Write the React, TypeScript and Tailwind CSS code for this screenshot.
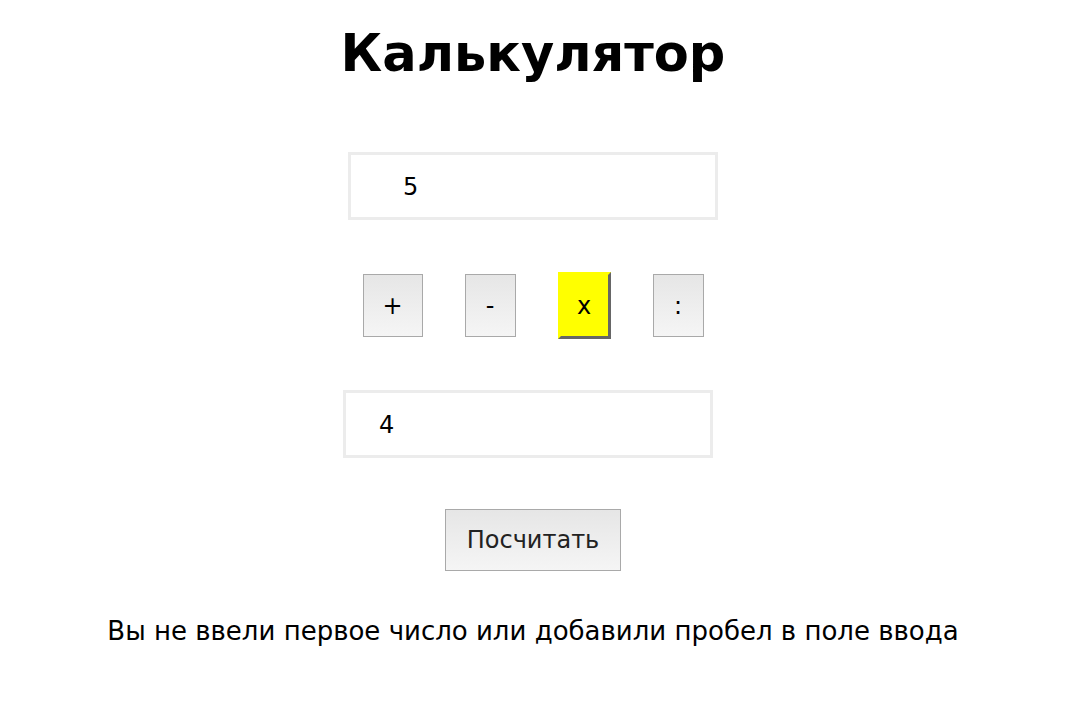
import React, { useState } from 'react';

const ops = [
  { sign: '+', w: 'w-[60px]' },
  { sign: '-', w: 'w-[51px]' },
  { sign: 'x', w: 'w-[53px]' },
  { sign: ':', w: 'w-[51px]' },
];

export default function App() {
  const [a, setA] = useState('5');
  const [b, setB] = useState('4');
  const [op, setOp] = useState('x');

  return (
    <div className="w-[1066px] min-h-[727px] bg-white text-black flex flex-col items-center" style={{ fontFamily: '"DejaVu Sans", Verdana, sans-serif' }}>
      <h1 className="mt-[21px] text-[51px] font-bold leading-[66px]">Калькулятор</h1>

      <input
        className="mt-[65px] w-[370px] h-[68px] border-[3px] border-[#ececec] pl-[52px] pt-[2px] text-[24px] outline-none"
        value={a}
        onChange={e => setA(e.target.value)}
      />

      <div className="mt-[52px] flex items-center gap-[42px]">
        {ops.map(o => (
          <button
            key={o.sign}
            onClick={() => setOp(o.sign)}
            className={
              o.sign === op
                ? o.w + ' h-[67px] text-[24px] bg-[#ffff00] border-[3px] border-t-[#ffff00] border-l-[#ffff00] border-r-[#666666] border-b-[#666666]'
                : o.w + ' h-[63px] text-[24px] border border-[#a9a9a9] bg-gradient-to-b from-[#e6e6e6] to-[#f5f5f5]'
            }
          >
            {o.sign}
          </button>
        ))}
      </div>

      <input
        className="mt-[51px] -ml-[10px] w-[370px] h-[68px] border-[3px] border-[#ececec] pl-[33px] pt-[2px] text-[24px] outline-none"
        value={b}
        onChange={e => setB(e.target.value)}
      />

      <button className="mt-[51px] w-[176px] h-[62px] text-[24px] text-[#222] border border-[#a9a9a9] bg-gradient-to-b from-[#e6e6e6] to-[#f5f5f5]">
        Посчитать
      </button>

      <p className="mt-[44px] text-[26px] leading-[32px]">Вы не ввели первое число или добавили пробел в поле ввода</p>
    </div>
  );
}
